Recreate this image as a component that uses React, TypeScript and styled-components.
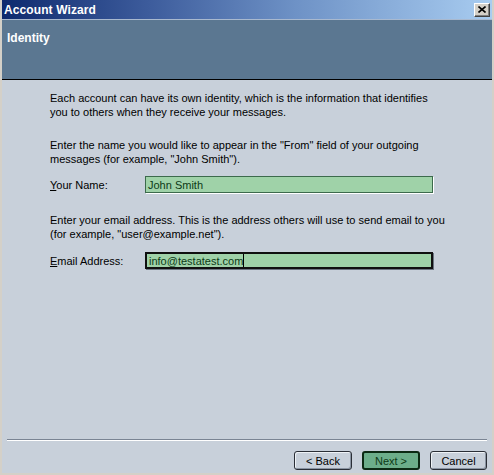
import React from 'react';
import styled, { createGlobalStyle } from 'styled-components';

const GlobalStyle = createGlobalStyle`
	html,
	body {
		margin: 0;
		padding: 0;
		background: #d4d0c8;
	}
	* {
		box-sizing: border-box;
	}
`;

const Window = styled.div`
	width: 494px;
	height: 475px;
	display: flex;
	flex-direction: column;
	padding: 0 2px 2px 2px;
	background: #d4d0c8;
	font-family: 'Liberation Sans', Arial, sans-serif;
	font-size: 11px;
	color: #000;
`;

const TitleBar = styled.div`
	height: 20px;
	display: flex;
	align-items: center;
	justify-content: space-between;
	padding: 0 2px 0 2px;
	background: linear-gradient(to right, #0e2a6e 0%, #3d5c9c 30%, #6e92c6 60%, #a8ccf0 100%);
	border-bottom: 1px solid #a9b9cf;
`;

const Title = styled.span`
	color: #fff;
	font-weight: bold;
	font-size: 12px;
	letter-spacing: 0.1px;
`;

const CloseButton = styled.div`
	width: 16px;
	height: 14px;
	display: flex;
	align-items: center;
	justify-content: center;
	background: #d4d0c8;
	border: 1px solid;
	border-color: #fff #404040 #404040 #fff;
	box-shadow: inset -1px -1px 0 #808080;
`;

const Header = styled.div`
	height: 60px;
	padding: 11px 5px 0;
	background: #5b7791;
	border-bottom: 1px solid #000;
`;

const HeaderTitle = styled.div`
	color: #fff;
	font-weight: bold;
	font-size: 12px;
`;

const Body = styled.div`
	flex: 1;
	display: flex;
	flex-direction: column;
	background: #c8d0da;
`;

const Content = styled.div`
	flex: 1;
	padding: 11px 10px 0 48px;
`;

const Text = styled.p<{ $gap?: number }>`
	margin: ${({ $gap }) => $gap ?? 0}px 0 0 0;
	line-height: 14px;
	white-space: nowrap;
`;

const FieldRow = styled.div<{ $gap: number }>`
	display: flex;
	align-items: center;
	margin-top: ${({ $gap }) => $gap}px;
`;

const Label = styled.label`
	width: 95px;
	flex-shrink: 0;
	u {
		text-decoration: underline;
	}
`;

const Field = styled.div<{ $focused?: boolean }>`
	width: 288px;
	height: 17px;
	display: flex;
	align-items: center;
	padding-left: 2px;
	background: #9fd2a8;
	color: #0c3a16;
	border: ${({ $focused }) => ($focused ? '2px solid #101010' : '1px solid #3c6a4c')};
	box-shadow: ${({ $focused }) => ($focused ? '1px 1px 0 #6b7480' : '1px 1px 0 #fff')};
`;

const Caret = styled.span`
	display: inline-block;
	width: 1px;
	height: 13px;
	background: #000;
`;

const Footer = styled.div`
	padding: 0 5px 3px;
`;

const Separator = styled.div`
	height: 2px;
	border-top: 1px solid #7a8493;
	border-bottom: 1px solid #fff;
`;

const ButtonRow = styled.div`
	display: flex;
	justify-content: flex-end;
	gap: 10px;
	margin-top: 10px;
`;

const Button = styled.button<{ $primary?: boolean; $w?: number }>`
	width: ${({ $w }) => $w ?? 58}px;
	height: 19px;
	padding: 0;
	font-family: 'Liberation Sans', Arial, sans-serif;
	font-size: 11px;
	color: ${({ $primary }) => ($primary ? '#0c3a16' : '#000')};
	background: ${({ $primary }) => ($primary ? '#6cae8a' : '#c8d0da')};
	border: ${({ $primary }) => ($primary ? '2px solid #0c2a14' : '1px solid #2a2e36')};
	border-radius: 3px;
	box-shadow: ${({ $primary }) => ($primary ? 'none' : 'inset 1px 1px 0 #eef2f6, inset -1px -1px 0 #8a94a2')};
`;

export default function App() {
	return (
		<>
			<GlobalStyle />
			<Window>
				<TitleBar>
					<Title>Account Wizard</Title>
					<CloseButton>
						<svg width="8" height="7" viewBox="0 0 8 7">
							<path d="M0.5 0.5 L7.5 6.5 M7.5 0.5 L0.5 6.5" stroke="#000" strokeWidth="1.6" />
						</svg>
					</CloseButton>
				</TitleBar>
				<Header>
					<HeaderTitle>Identity</HeaderTitle>
				</Header>
				<Body>
					<Content>
						<Text>
							Each account can have its own identity, which is the information that identifies
							<br />
							you to others when they receive your messages.
						</Text>
						<Text $gap={19}>
							Enter the name you would like to appear in the "From" field of your outgoing
							<br />
							messages (for example, "John Smith").
						</Text>
						<FieldRow $gap={10}>
							<Label>
								<u>Y</u>our Name:
							</Label>
							<Field>John Smith</Field>
						</FieldRow>
						<Text $gap={20}>
							Enter your email address. This is the address others will use to send email to you
							<br />
							(for example, "user@example.net").
						</Text>
						<FieldRow $gap={11}>
							<Label>
								<u>E</u>mail Address:
							</Label>
							<Field $focused>
								info@testatest.com
								<Caret />
							</Field>
						</FieldRow>
					</Content>
					<Footer>
						<Separator />
						<ButtonRow>
							<Button>&lt; Back</Button>
							<Button $primary>Next &gt;</Button>
							<Button $w={57}>Cancel</Button>
						</ButtonRow>
					</Footer>
				</Body>
			</Window>
		</>
	);
}
